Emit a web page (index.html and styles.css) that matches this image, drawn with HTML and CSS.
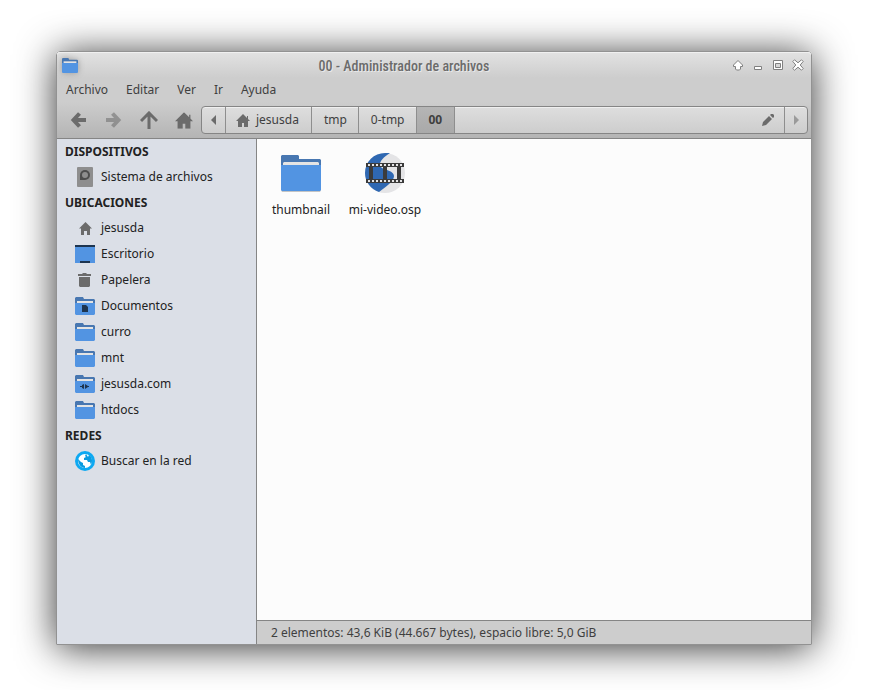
FILE: index.html
```html
<!DOCTYPE html>
<html lang="es">
<head>
    <meta charset="UTF-8">
    <meta name="viewport" content="width=device-width, initial-scale=1.0">
    <title>00 - Administrador de archivos</title>
    <link rel="stylesheet" href="styles.css">
</head>
<body>

<!-- shared icons -->
<svg class="sprite" aria-hidden="true">
    <symbol id="folder" viewBox="0 0 20 18">
        <path fill="#4877b1" d="M1 0h7l1 2h10l1 1v8H0V1z"/>
        <path fill="#e4e4e4" d="M2 4h16v4H2z"/>
        <path fill="#5294e2" d="M0 6h20v11l-1 1H1l-1-1z"/>
    </symbol>
    <symbol id="home" viewBox="0 0 14 13">
        <path d="M7 0L0 7h2v6h4V9h2v4h4V7h2l-2-2V2h-1v2z"/>
    </symbol>
</svg>

<div class="window">
    <header class="header">
        <div class="titlebar">
            <svg class="app-icon" width="16" height="15" viewBox="0 0 20 18" preserveAspectRatio="none"><use href="#folder"/></svg>
            <h1>00 - Administrador de archivos</h1>
            <div class="controls">
                <button aria-label="Enrollar"><svg width="12" height="12" viewBox="0 0 12 12"><path d="M6 1.500L10.500 6v1.500h-2v2.500l-1 1h-3l-1-1V7.500h-2V6z"/></svg></button>
                <button aria-label="Minimizar"><svg width="12" height="12" viewBox="0 0 12 12"><path d="M2.500 7.500h7v3h-7z"/></svg></button>
                <button aria-label="Maximizar"><svg width="12" height="12" viewBox="0 0 12 12"><path d="M1.500 1.500h9v9h-9zM3.500 4.500h5v4h-5z" fill-rule="evenodd"/></svg></button>
                <button aria-label="Cerrar"><svg width="12" height="12" viewBox="0 0 12 12"><path d="M2.500.8L6 3.800 9.500.8l1.700 1.700L8.200 6l3 3.500-1.700 1.700L6 8.200l-3.500 3L.8 9.500 3.800 6l-3-3.500z"/></svg></button>
            </div>
        </div>
        <nav class="menubar">
            <button>Archivo</button>
            <button>Editar</button>
            <button>Ver</button>
            <button>Ir</button>
            <button>Ayuda</button>
        </nav>
        <div class="toolbar">
            <div class="tools">
                <button aria-label="Atrás"><svg width="18" height="18" viewBox="0 0 18 18"><path class="stroke" stroke-width="4" d="M16 9H4M9.500 2.500L3.500 9l6 6.500"/></svg></button>
                <button aria-label="Adelante" disabled><svg width="18" height="18" viewBox="0 0 18 18"><path class="stroke" stroke-width="4" d="M1 9h12M7.500 2.500l6 6.500-6 6.500"/></svg></button>
                <button aria-label="Subir"><svg width="18" height="18" viewBox="0 0 18 18"><path class="stroke" stroke-width="3" d="M9 18V3M1 10l8-8 8 8"/></svg></button>
                <button aria-label="Inicio"><svg width="18" height="17" viewBox="0 0 14 13"><use href="#home"/></svg></button>
            </div>
            <div class="pathbar">
                <button class="step" aria-label="Anterior"><svg width="5" height="10" viewBox="0 0 5 10"><path d="M5 0v10L0 5z"/></svg></button>
                <button><svg width="14" height="13"><use href="#home"/></svg>jesusda</button>
                <button>tmp</button>
                <button>0-tmp</button>
                <button class="current">00</button>
                <button class="edit" aria-label="Editar ruta"><svg width="14" height="14" viewBox="0 0 14 14"><path d="M1 13l1-4 6-6 3 3-6 6zM9 2l1-1h2l1 1v2l-1 1z"/></svg></button>
                <button class="step next" aria-label="Siguiente" disabled><svg width="5" height="10" viewBox="0 0 5 10"><path d="M0 0v10l5-5z"/></svg></button>
            </div>
        </div>
    </header>

    <div class="main">
        <aside class="sidebar">
            <h2>DISPOSITIVOS</h2>
            <a href="#"><svg width="20" height="20" viewBox="0 0 20 20"><rect x="2" width="16" height="20" rx="1" fill="#8e8e8e"/><path fill="#4d4d4d" d="M5 13V8a5 5 0 1 1 5 5z"/><circle cx="10" cy="8" r="3" fill="#8e8e8e"/></svg>Sistema de archivos</a>
            <h2>UBICACIONES</h2>
            <a href="#"><svg width="20" height="20" viewBox="0 0 20 20"><path d="M10.500 4L4 10.500h2V17h3v-4h3v4h3v-6.500h2z"/></svg>jesusda</a>
            <a href="#"><svg width="20" height="20" viewBox="0 0 20 20"><path fill="#5294e2" d="M0 1h20v18H0z"/><path fill="#1d344f" d="M0 1h20v2H0zM5 17h10v2H5z"/></svg>Escritorio</a>
            <a href="#"><svg width="20" height="20" viewBox="0 0 20 20"><path d="M3 4h4l1-1h3l1 1h4v2H3zM4 7h11v9l-1 1H5l-1-1z"/></svg>Papelera</a>
            <a href="#"><svg width="20" height="20" viewBox="0 0 20 20"><use href="#folder" y="1" width="20" height="18"/><path fill="#1d344f" d="M7 9h4l2 2v5H7z"/></svg>Documentos</a>
            <a href="#"><svg width="20" height="20"><use href="#folder" y="1" width="20" height="18"/></svg>curro</a>
            <a href="#"><svg width="20" height="20"><use href="#folder" y="1" width="20" height="18"/></svg>mnt</a>
            <a href="#"><svg width="20" height="20" viewBox="0 0 20 20"><use href="#folder" y="1" width="20" height="18"/><path fill="#1d344f" d="M5 12h2v-1l2-1v5l-2-1v-1H5zM10 10l3 2h1v1h-1l-3 2z"/></svg>jesusda.com</a>
            <a href="#"><svg width="20" height="20"><use href="#folder" y="1" width="20" height="18"/></svg>htdocs</a>
            <h2>REDES</h2>
            <a href="#"><svg width="20" height="20" viewBox="0 0 20 20"><circle cx="10" cy="10" r="10" fill="#0ea9f2"/><circle cx="10" cy="10" r="7" fill="#fff"/><path fill="#0b9be0" d="M3 8l3 3 2 1v2l2 1v2c-4 0-7-4-7-9zM11 3l-1 2 1 1-2 1v2h3l1 2h2l1 3c2-4 1-8-2-10l-1 2z"/></svg>Buscar en la red</a>
        </aside>

        <section class="content">
            <div class="files">
                <button class="file">
                    <svg width="40" height="40" viewBox="0 0 40 40">
                        <path fill="#4877b1" d="M1 2h16l1 1v3h21l1 1v11H0V3z"/>
                        <path fill="#e4e4e4" d="M2 10l1-1h34l1 1v5H2z"/>
                        <path fill="#c4c4c4" d="M0 36h40v1l-1 2H1l-1-2z"/>
                        <path fill="#5294e2" d="M0 12h40v25l-1 1H1l-1-1z"/>
                    </svg>
                    thumbnail
                </button>
                <button class="file">
                    <svg width="40" height="40" viewBox="0 0 40 40">
                        <circle cx="20" cy="20" r="20" fill="#e4e4e6"/>
                        <path fill="#2f68b2" d="M20 0h5C19 4 14 8 15 13c2 4 14 4 14 10 0 5-8 11-15 16A20 20 0 0 1 0 20 20 20 0 0 1 20 0z"/>
                        <path fill="#3b3b3b" d="M1 10h38v4H1zM1 26h38v4H1zM4 14h4v13H4zM18 14h4v13h-4zM32 14h4v13h-4z"/>
                        <path stroke="#e4e4e6" stroke-width="2" stroke-dasharray="2 2" d="M3 12h35M3 28h35"/>
                    </svg>
                    mi-video.osp
                </button>
            </div>
            <footer class="status">2 elementos: 43,6 KiB (44.667 bytes), espacio libre: 5,0 GiB</footer>
        </section>
    </div>
</div>

</body>
</html>
```
FILE: styles.css
```css
* {
    box-sizing: border-box;
}
body {
    display: flex;
    min-height: 100vh;
    margin: 0;
    padding: 51px 81px 45px 56px;
    background: #fff;
    color: #222;
    font-family: "Noto Sans", sans-serif;
    font-size: 12px;
    line-height: 18px;
}
button {
    display: flex;
    align-items: center;
    justify-content: center;
    margin: 0;
    padding: 0;
    border: none;
    background: none;
    color: #3f3f3f;
    font: inherit;
}
svg {
    display: block;
    flex: none;
    fill: #6b6b6b;
}
.sprite {
    position: absolute;
    width: 0;
    height: 0;
}
.stroke {
    fill: none;
    stroke: #6b6b6b;
}
button:disabled svg {
    opacity: 0.55;
}
.window {
    display: flex;
    flex: 1;
    flex-direction: column;
    min-width: 0;
    border: 1px solid #929292;
    border-radius: 4px 4px 0 0;
    box-shadow: 0 3px 38px rgba(0, 0, 0, 0.8);
}

/* title, menu and toolbar */
.header {
    border-bottom: 1px solid #858585;
    border-radius: 3px 3px 0 0;
    background: linear-gradient(#e2e2e2, #cdcdcd 26px, #cdcdcd 50px, #b4b4b4);
    box-shadow: inset 0 1px #f0f0f0;
}
.titlebar {
    display: flex;
    align-items: center;
    height: 26px;
    padding: 0 7px 0 5px;
}
.titlebar h1 {
    flex: 1;
    margin: 0;
    padding: 2px 2px 0 0;
    color: #6b6b6b;
    font-family: "Roboto Condensed", "Liberation Sans Narrow", "Noto Sans", sans-serif;
    font-size: 14px;
    font-weight: 500;
    line-height: 20px;
    text-align: center;
    text-shadow: 1px 1px #e8e8e8;
}
.app-icon {
    filter: drop-shadow(0 0 3px #999);
}
.controls {
    display: flex;
    gap: 8px;
}
.controls svg {
    fill: #fff;
    stroke: #808080;
}
.menubar {
    display: flex;
    height: 24px;
}
.menubar button {
    padding: 0 9px;
}
.toolbar {
    display: flex;
    height: 36px;
    padding: 4px 3px;
}
.tools {
    display: flex;
    padding-left: 1px;
}
.tools button {
    width: 35px;
}
.pathbar {
    display: flex;
    flex: 1;
    border: 1px solid #858585;
    border-radius: 4px;
    background: linear-gradient(#dedede, #cdcdcd);
    box-shadow: inset 0 1px #efefef;
}
.pathbar button {
    gap: 6px;
    padding: 0 11px 0 12px;
    border-right: 1px solid #8e8e8e;
}
.pathbar button:nth-child(2) {
    padding: 0 12px 0 10px;
}
.pathbar .step {
    width: 24px;
    padding: 0;
}
.pathbar .current {
    padding: 0 12px;
    background: linear-gradient(#b5b5b5, #a9a9a9);
    font-weight: bold;
}
.pathbar .edit {
    margin-left: auto;
    padding: 0 9px;
}
.pathbar .next {
    width: 22px;
    border: none;
}

/* places on the left, files on the right */
.main {
    display: flex;
    flex: 1;
}
.sidebar {
    width: 200px;
    border-right: 1px solid #858585;
    background: #dbdfe7;
}
.sidebar h2 {
    margin: 0;
    padding-left: 8px;
    font-size: 12px;
    line-height: 25px;
}
.sidebar a {
    display: flex;
    align-items: center;
    gap: 6px;
    height: 26px;
    padding-left: 18px;
    color: #222;
    text-decoration: none;
}
.content {
    display: flex;
    flex: 1;
    flex-direction: column;
    background: #fcfcfc;
}
.files {
    display: flex;
    flex: 1;
    align-items: flex-start;
    padding: 14px 2px;
}
.file {
    flex-direction: column;
    gap: 8px;
    width: 84px;
    color: #222;
}
.status {
    padding: 3px 14px 2px;
    border-top: 1px solid #858585;
    background: #cdcdcd;
    color: #3f3f3f;
}
```
